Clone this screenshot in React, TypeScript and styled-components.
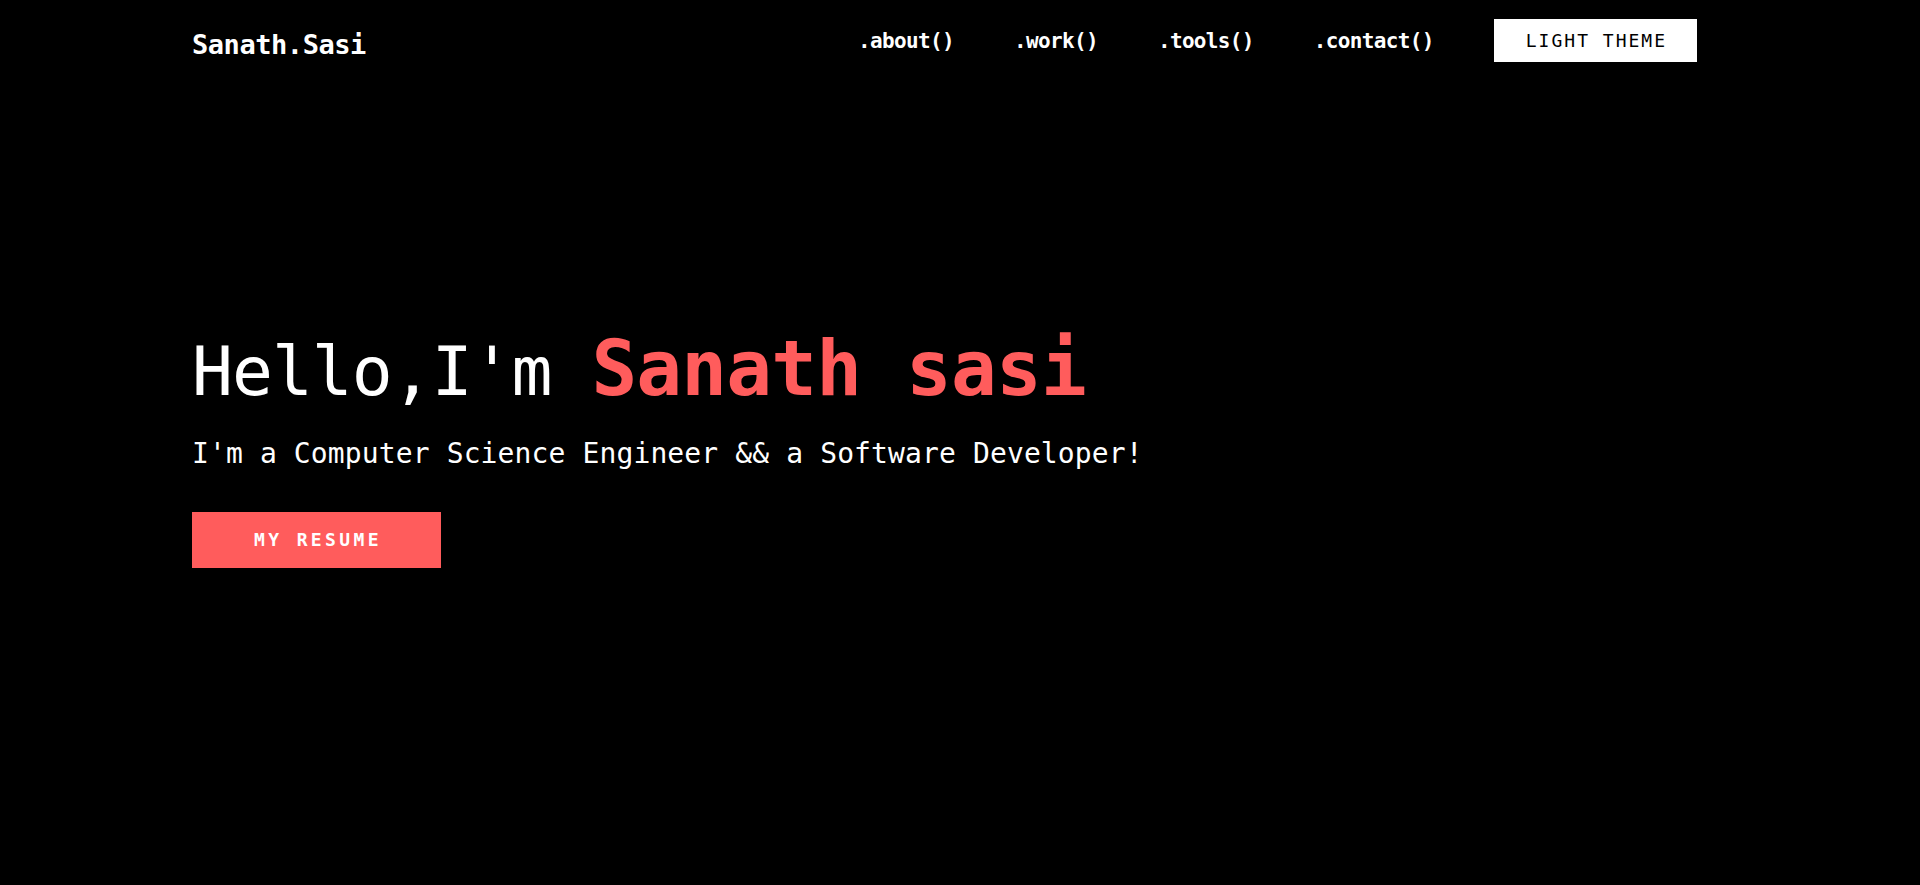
import React from "react";
import styled, { createGlobalStyle } from "styled-components";

const ACCENT = "#ff5c5c";

const GlobalStyle = createGlobalStyle`
  html, body {
    margin: 0;
    padding: 0;
    background: #000;
  }
  body {
    font-family: "DejaVu Sans Mono", "Liberation Mono", monospace;
    color: #fff;
  }
  * { box-sizing: border-box; }
`;

const Page = styled.div`
  min-height: 100vh;
  background: #000;
`;

const Container = styled.div`
  width: 1536px;
  margin: 0 auto;
`;

const Header = styled.header`
  height: 81px;
  display: flex;
  align-items: center;
  justify-content: space-between;
  padding-right: 31px;
`;

const Logo = styled.a`
  font-family: "DejaVu Sans Mono", monospace;
  font-weight: 700;
  font-size: 27px;
  letter-spacing: -0.45px;
  color: #fff;
  text-decoration: none;
  margin-top: 8px;
`;

const Nav = styled.nav`
  display: flex;
  align-items: center;
  gap: 60px;
`;

const NavLink = styled.a`
  font-family: "DejaVu Sans Mono", monospace;
  font-weight: 700;
  font-size: 21px;
  letter-spacing: -0.65px;
  color: #fff;
  text-decoration: none;
  margin-top: 0;
`;

const ThemeButton = styled.button`
  height: 43px;
  padding: 0 30px 0 32px;
  border: none;
  background: #fff;
  color: #000;
  font-family: "DejaVu Sans Mono", monospace;
  font-size: 18px;
  letter-spacing: 2px;
  cursor: pointer;
`;

const Hero = styled.section`
  padding-top: 250px;
  display: flex;
  flex-direction: column;
  align-items: flex-start;
`;

const Title = styled.h1`
  margin: 0;
  font-weight: 400;
  font-size: 68px;
  letter-spacing: -1px;
  line-height: 1;
  color: #fff;
`;

const Name = styled.span`
  font-weight: 700;
  font-size: 76px;
  letter-spacing: -0.8px;
  color: ${ACCENT};
`;

const Subtitle = styled.p`
  margin: 30px 0 0;
  font-size: 28px;
  letter-spacing: 0.12px;
  line-height: 1.2;
  color: #fff;
`;

const ResumeButton = styled.a`
  margin-top: 41px;
  width: 249px;
  height: 56px;
  display: flex;
  align-items: center;
  justify-content: center;
  padding-left: 3px;
  background: ${ACCENT};
  color: #fff;
  font-family: "DejaVu Sans Mono", monospace;
  font-weight: 700;
  font-size: 18px;
  letter-spacing: 3.4px;
  text-decoration: none;
`;

export default function App() {
  return (
    <>
      <GlobalStyle />
      <Page>
        <Container>
          <Header>
            <Logo href="#">Sanath.Sasi</Logo>
            <Nav>
              <NavLink href="#about">.about()</NavLink>
              <NavLink href="#work">.work()</NavLink>
              <NavLink href="#tools">.tools()</NavLink>
              <NavLink href="#contact">.contact()</NavLink>
              <ThemeButton>LIGHT THEME</ThemeButton>
            </Nav>
          </Header>
          <Hero>
            <Title>
              Hello,I'm <Name>Sanath sasi</Name>
            </Title>
            <Subtitle>I'm a Computer Science Engineer &amp;&amp; a Software Developer!</Subtitle>
            <ResumeButton href="#">MY RESUME</ResumeButton>
          </Hero>
        </Container>
      </Page>
    </>
  );
}
